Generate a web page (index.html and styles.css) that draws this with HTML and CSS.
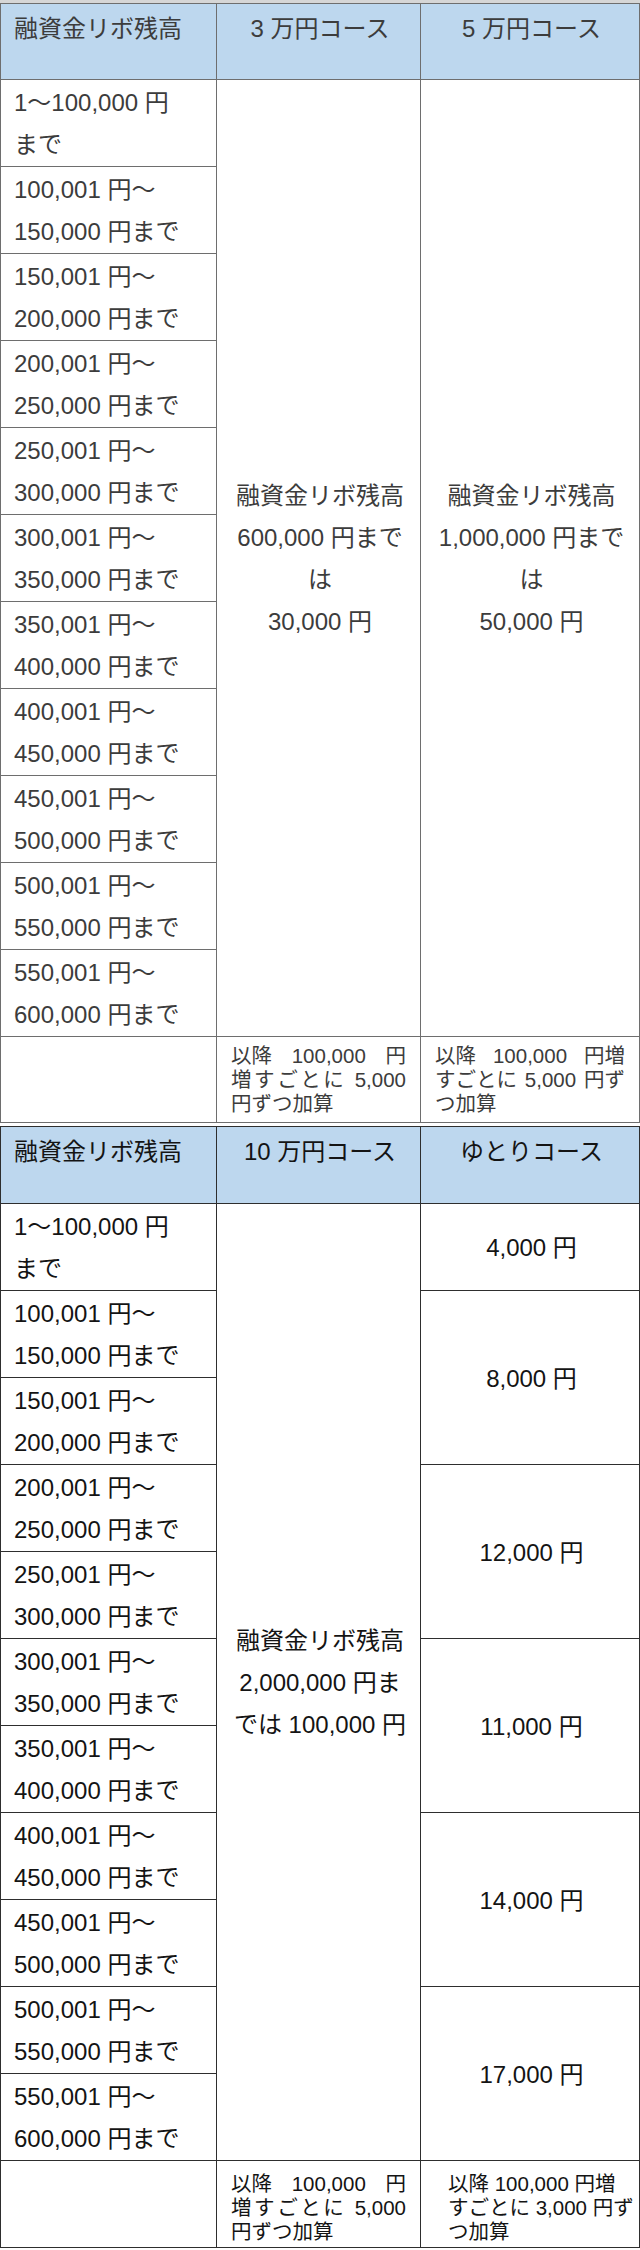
FILE: index.html
```html
<!DOCTYPE html>
<html lang="ja">
<head>
<meta charset="utf-8">
<title>融資金リボ残高 コース一覧</title>
<link rel="stylesheet" href="styles.css">
</head>
<body>
<div class="page">
  <table class="rate rate-a">
    <colgroup><col class="c1"><col class="c2"><col class="c3"></colgroup>
    <thead>
      <tr class="head">
        <th class="h-left">融資金リボ残高</th>
        <th>3 万円コース</th>
        <th>5 万円コース</th>
      </tr>
    </thead>
    <tbody>
      <tr class="row">
        <td class="range">1～100,000 円<br>まで</td>
        <td class="course" rowspan="11">融資金リボ残高<br>600,000 円まで<br>は<br>30,000 円</td>
        <td class="course" rowspan="11">融資金リボ残高<br>1,000,000 円まで<br>は<br>50,000 円</td>
      </tr>
      <tr class="row"><td class="range">100,001 円～<br>150,000 円まで</td></tr>
      <tr class="row"><td class="range">150,001 円～<br>200,000 円まで</td></tr>
      <tr class="row"><td class="range">200,001 円～<br>250,000 円まで</td></tr>
      <tr class="row"><td class="range">250,001 円～<br>300,000 円まで</td></tr>
      <tr class="row"><td class="range">300,001 円～<br>350,000 円まで</td></tr>
      <tr class="row"><td class="range">350,001 円～<br>400,000 円まで</td></tr>
      <tr class="row"><td class="range">400,001 円～<br>450,000 円まで</td></tr>
      <tr class="row"><td class="range">450,001 円～<br>500,000 円まで</td></tr>
      <tr class="row"><td class="range">500,001 円～<br>550,000 円まで</td></tr>
      <tr class="row"><td class="range">550,001 円～<br>600,000 円まで</td></tr>
      <tr class="foot">
        <td></td>
        <td class="note">
          <span class="ln"><span>以降</span><span>100,000</span><span>円</span></span>
          <span class="ln spread">増すごとに 5,000</span>
          <span class="ln last">円ずつ加算</span>
        </td>
        <td class="note">
          <span class="ln"><span>以降</span><span>100,000</span><span>円増</span></span>
          <span class="ln"><span>すごとに</span><span>5,000</span><span>円ず</span></span>
          <span class="ln last">つ加算</span>
        </td>
      </tr>
    </tbody>
  </table>

  <table class="rate rate-b">
    <colgroup><col class="c1"><col class="c2"><col class="c3"></colgroup>
    <thead>
      <tr class="head">
        <th class="h-left">融資金リボ残高</th>
        <th>10 万円コース</th>
        <th>ゆとりコース</th>
      </tr>
    </thead>
    <tbody>
      <tr class="row">
        <td class="range">1～100,000 円<br>まで</td>
        <td class="course" rowspan="11">融資金リボ残高<br>2,000,000 円ま<br>では 100,000 円</td>
        <td class="amount">4,000 円</td>
      </tr>
      <tr class="row"><td class="range">100,001 円～<br>150,000 円まで</td><td class="amount" rowspan="2">8,000 円</td></tr>
      <tr class="row"><td class="range">150,001 円～<br>200,000 円まで</td></tr>
      <tr class="row"><td class="range">200,001 円～<br>250,000 円まで</td><td class="amount" rowspan="2">12,000 円</td></tr>
      <tr class="row"><td class="range">250,001 円～<br>300,000 円まで</td></tr>
      <tr class="row"><td class="range">300,001 円～<br>350,000 円まで</td><td class="amount" rowspan="2">11,000 円</td></tr>
      <tr class="row"><td class="range">350,001 円～<br>400,000 円まで</td></tr>
      <tr class="row"><td class="range">400,001 円～<br>450,000 円まで</td><td class="amount" rowspan="2">14,000 円</td></tr>
      <tr class="row"><td class="range">450,001 円～<br>500,000 円まで</td></tr>
      <tr class="row"><td class="range">500,001 円～<br>550,000 円まで</td><td class="amount" rowspan="2">17,000 円</td></tr>
      <tr class="row"><td class="range">550,001 円～<br>600,000 円まで</td></tr>
      <tr class="foot">
        <td></td>
        <td class="note">
          <span class="ln"><span>以降</span><span>100,000</span><span>円</span></span>
          <span class="ln spread">増すごとに 5,000</span>
          <span class="ln last">円ずつ加算</span>
        </td>
        <td class="note note-plain">
          <span class="ln">以降 100,000 円増</span>
          <span class="ln">すごとに 3,000 円ず</span>
          <span class="ln">つ加算</span>
        </td>
      </tr>
    </tbody>
  </table>
</div>
</body>
</html>
```

FILE: styles.css
```css
* { box-sizing: border-box; }

html, body {
  margin: 0;
  padding: 0;
  background: #ffffff;
}

.page {
  width: 640px;
  border-top: 3px solid #d6d6d6;
  display: flex;
  flex-direction: column;
  gap: 3px;
}

.rate {
  width: 639px;
  table-layout: fixed;
  border-collapse: collapse;
  font-family: "Liberation Sans", "Noto Sans CJK JP", sans-serif;
  font-size: 24px;
  line-height: 42px;
}

.c1 { width: 216px; }
.c2 { width: 204px; }
.c3 { width: 219px; }

.rate th,
.rate td {
  padding: 2px 10px 0 13px;
  vertical-align: top;
  font-weight: normal;
}

.rate-a { color: #3c3c3c; }
.rate-a th, .rate-a td { border: 1px solid #6e6e6e; }
.rate-b { color: #141414; }
.rate-b th, .rate-b td { border: 1px solid #2e2e2e; }

.head th {
  height: 76px;
  background: #bdd7ee;
  text-align: center;
  padding-top: 4px;
}
.rate-b .head th { height: 77px; }
.head .h-left { text-align: left; }

.row td { height: 87px; }

.range {
  text-align: left;
  white-space: nowrap;
}

.course,
.amount {
  text-align: center;
  vertical-align: middle !important;
  padding-left: 6px;
  padding-right: 6px;
  white-space: nowrap;
}

.foot td { height: 86px; }
.rate-b .foot td { height: 87px; }

.note {
  font-size: 20.5px;
  line-height: 24px;
  vertical-align: middle !important;
  padding: 0 14px 0 14px !important;
}
.rate-b .note { padding-top: 8px !important; }

.ln {
  display: flex;
  justify-content: space-between;
  white-space: nowrap;
}
.ln.spread {
  display: block;
  white-space: normal;
  text-align: justify;
  text-align-last: justify;
}
.ln.last { display: block; }

.note-plain { padding-left: 27px !important; }
.note-plain .ln { display: block; }
```
